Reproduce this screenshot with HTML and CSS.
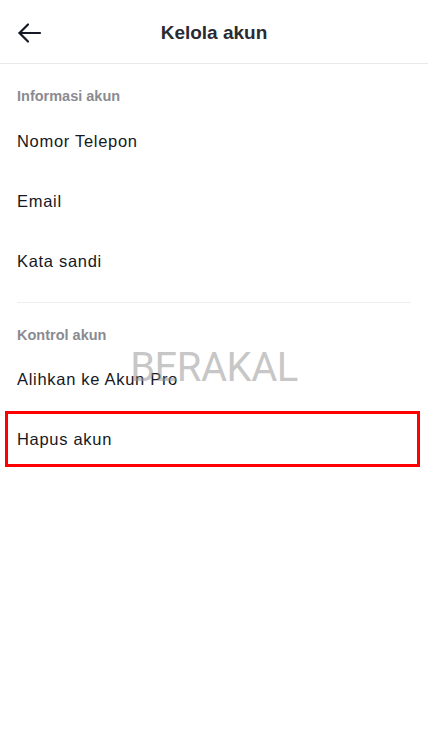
FILE: index.html
```html
<!DOCTYPE html>
<html lang="id">
<head>
<meta charset="utf-8">
<title>Kelola akun</title>
<link rel="stylesheet" href="styles.css">
</head>
<body>
<div class="screen">
  <header class="topbar">
    <button class="back" aria-label="Kembali">
      <svg width="25" height="24" viewBox="0 0 25 24" fill="none" stroke="#161823" stroke-width="2.2" stroke-linecap="round" stroke-linejoin="round">
        <path d="M23 12H2.5"/>
        <path d="M11 3.5L2.5 12L11 20.5"/>
      </svg>
    </button>
    <h1 class="title">Kelola akun</h1>
  </header>

  <section class="group">
    <div class="label">Informasi akun</div>
    <div class="row">Nomor Telepon</div>
    <div class="row">Email</div>
    <div class="row">Kata sandi</div>
  </section>

  <div class="divider"></div>

  <section class="group">
    <div class="label label-tight">Kontrol akun</div>
    <div class="row">Alihkan ke Akun Pro</div>
    <div class="row row-marked">Hapus akun</div>
  </section>

  <div class="watermark">BERAKAL</div>
</div>
</body>
</html>
```

FILE: styles.css
```css
* { box-sizing: border-box; }
html, body { margin: 0; padding: 0; background: #fff; }
body {
  font-family: "Liberation Sans", Arial, sans-serif;
  color: #161823;
}
.screen {
  position: relative;
  width: 428px;
  min-height: 740px;
  background: #fff;
}
.topbar {
  position: relative;
  height: 64px;
  border-bottom: 1px solid #e9e9ea;
  display: flex;
  align-items: center;
  justify-content: center;
}
.back {
  position: absolute;
  left: 17px;
  top: 21px;
  width: 25px;
  height: 24px;
  padding: 0;
  border: 0;
  background: none;
  display: flex;
}
.title {
  margin: 0;
  font-size: 19px;
  font-weight: 700;
  color: #2a2b31;
  line-height: 24px;
  padding-top: 2px;
}
.group { display: flex; flex-direction: column; }
.label {
  padding: 22px 17px 5px;
  font-size: 14.5px;
  line-height: 20px;
  font-weight: 700;
  color: #8a8b91;
}
.label-tight { padding-bottom: 4px; }
.row {
  position: relative;
  height: 60px;
  padding: 0 17px;
  display: flex;
  align-items: center;
  font-size: 16.5px;
  letter-spacing: 0.7px;
  color: #161823;
}
.divider {
  height: 1px;
  margin: 11px 17px 0;
  background: #eeeef0;
}
.row-marked::after {
  content: "";
  position: absolute;
  left: 5px;
  right: 8px;
  top: 2px;
  bottom: 2px;
  border: 3px solid #ff0000;
}
.watermark {
  position: absolute;
  left: 0;
  right: 0;
  top: 345px;
  text-align: center;
  font-family: Roboto, "Liberation Sans", sans-serif;
  font-size: 40px;
  line-height: 46px;
  color: rgba(150, 150, 150, 0.55);
  letter-spacing: -0.5px;
  pointer-events: none;
}
```
